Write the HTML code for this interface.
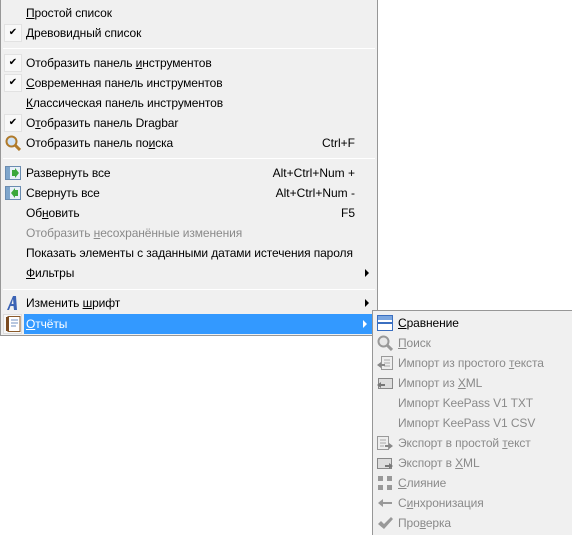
<!DOCTYPE html>
<html><head><meta charset="utf-8"><style>
*{margin:0;padding:0;box-sizing:border-box}
html,body{width:572px;height:535px;overflow:hidden}
body{background:#fff;position:relative;font-family:"Liberation Sans","DejaVu Sans",sans-serif;font-size:12px;color:#000}
.m{position:absolute;background:#f0f0f0;border:1px solid #979797}
.r{position:absolute;left:0;height:20px;line-height:21px;white-space:nowrap}
.t{position:absolute;left:25px;letter-spacing:-0.1px}
.k{position:absolute;right:22px}
.sep{position:absolute;left:2px;right:2px;height:1px;background:#a0a0a0;border-bottom:1px solid #fff}
.chk{position:absolute;left:3px;top:1px;width:18px;height:18px;background:#f8f8f8;border:1px solid #e2e2e2;text-align:center;line-height:16px;font-size:10px}
.ar{position:absolute;right:8px;top:6px;width:0;height:0;border-left:4px solid #000;border-top:4px solid transparent;border-bottom:4px solid transparent}
.g{color:#8a8a8a}
.ic{position:absolute;left:4px;top:2px;width:16px;height:16px}
u{text-decoration:underline}
</style></head><body>
<div class="m" style="left:0;top:-1px;width:378px;height:337px">
 <div class="r" style="top:3px;width:376px"><span class="t"><u>П</u>ростой список</span></div>
 <div class="r" style="top:23px;width:376px"><span class="chk">✔</span><span class="t"><u>Д</u>ревовидный список</span></div>
 <div class="sep" style="top:48px"></div>
 <div class="r" style="top:53px;width:376px"><span class="chk">✔</span><span class="t">Отобразить панель <u>и</u>нструментов</span></div>
 <div class="r" style="top:73px;width:376px"><span class="chk">✔</span><span class="t"><u>С</u>овременная панель инструментов</span></div>
 <div class="r" style="top:93px;width:376px"><span class="t"><u>К</u>лассическая панель инструментов</span></div>
 <div class="r" style="top:113px;width:376px"><span class="chk">✔</span><span class="t">О<u>т</u>образить панель Dragbar</span></div>
 <div class="r" style="top:133px;width:376px"><svg class="ic" viewBox="0 0 16 16"><circle cx="6.5" cy="6.5" r="5" fill="#cfe3f7" stroke="#b07a2a" stroke-width="2"/><path d="M10 10l5 5" stroke="#b07a2a" stroke-width="3"/></svg><span class="t">Отобразить панель по<u>и</u>ска</span><span class="k">Ctrl+F</span></div>
 <div class="sep" style="top:158px"></div>
 <div class="r" style="top:163px;width:376px"><svg class="ic" viewBox="0 0 16 16"><rect x="0.5" y="1.5" width="15" height="13" fill="#e8f0f8" stroke="#6a8cb0"/><rect x="1" y="2" width="4" height="12" fill="#7fa6cc"/><path d="M7 5h3V3l4 5-4 5v-2H7z" fill="#3aa83a"/></svg><span class="t">Развернуть все</span><span class="k">Alt+Ctrl+Num +</span></div>
 <div class="r" style="top:183px;width:376px"><svg class="ic" viewBox="0 0 16 16"><rect x="0.5" y="1.5" width="15" height="13" fill="#e8f0f8" stroke="#6a8cb0"/><rect x="1" y="2" width="4" height="12" fill="#7fa6cc"/><path d="M13 5h-3V3L6 8l4 5v-2h3z" fill="#3aa83a"/></svg><span class="t">Свернуть все</span><span class="k">Alt+Ctrl+Num -</span></div>
 <div class="r" style="top:203px;width:376px"><span class="t">Об<u>н</u>овить</span><span class="k">F5</span></div>
 <div class="r g" style="top:223px;width:376px"><span class="t">Отобразить <u>н</u>есохранённые изменения</span></div>
 <div class="r" style="top:243px;width:376px"><span class="t">Показать элементы с заданными датами истечения пароля</span></div>
 <div class="r" style="top:263px;width:376px"><span class="t"><u>Ф</u>ильтры</span><span class="ar"></span></div>
 <div class="sep" style="top:289px"></div>
 <div class="r" style="top:293px;width:376px"><svg class="ic" viewBox="0 0 16 16"><path d="M2 15L8 1h3l1 14h-3l-.5-4H5.5L4 15z" fill="#3b63b5"/><path d="M6.5 9h2L8 4z" fill="#f0f0f0"/></svg><span class="t">Изменить <u>ш</u>рифт</span><span class="ar"></span></div>
 <div class="r" style="top:314px;left:2px;width:19px;background:#f8f8f8;border:1px solid #ddd"></div>
 <svg style="position:absolute;left:5px;top:316px" width="15" height="16" viewBox="0 0 15 16"><rect x="2" y="0.5" width="12" height="15" fill="#fff" stroke="#8a5a2a"/><rect x="0" y="1" width="3" height="14" fill="#7a4a20"/><path d="M5 4h7M5 7h7M5 10h5" stroke="#7090c0"/></svg>
 <div class="r" style="top:314px;left:23px;width:349px;background:#3399ff;color:#fff"><span class="t" style="left:2px"><u>О</u>тчёты</span><span class="ar" style="border-left-color:#fff;right:6px"></span></div>
</div>
<div class="m" style="left:372px;top:310px;width:210px;height:240px">
 <div class="r" style="top:2px;width:200px"><svg class="ic" viewBox="0 0 16 16"><rect x="0.5" y="0.5" width="15" height="15" fill="#fff" stroke="#3b6fc0"/><rect x="1" y="1" width="14" height="4" fill="#7aa6e0"/><rect x="1" y="7" width="14" height="2" fill="#3b6fc0"/></svg><span class="t"><u>С</u>равнение</span></div>
 <div class="r g" style="top:22px;width:200px"><svg class="ic" viewBox="0 0 16 16"><circle cx="6.5" cy="6.5" r="5" fill="#e8e8e8" stroke="#999" stroke-width="2"/><path d="M10 10l5 5" stroke="#999" stroke-width="3"/></svg><span class="t"><u>П</u>оиск</span></div>
 <div class="r g" style="top:42px;width:200px"><svg class="ic" viewBox="0 0 16 16"><rect x="4.5" y="1.5" width="11" height="13" fill="#eee" stroke="#999"/><path d="M7 5h6M7 8h6M7 11h6" stroke="#aaa"/><path d="M0 10l4-3v2h4v2H4v2z" fill="#888"/></svg><span class="t">Импорт из простого <u>т</u>екста</span></div>
 <div class="r g" style="top:62px;width:200px"><svg class="ic" viewBox="0 0 16 16"><rect x="1.5" y="3.5" width="14" height="10" fill="#ddd" stroke="#888"/><path d="M0 10l4-3v2h4v2H4v2z" fill="#777"/></svg><span class="t">Импорт из <u>X</u>ML</span></div>
 <div class="r g" style="top:82px;width:200px"><span class="t">Импорт KeePass V1 TXT</span></div>
 <div class="r g" style="top:102px;width:200px"><span class="t">Импорт KeePass V1 CSV</span></div>
 <div class="r g" style="top:122px;width:200px"><svg class="ic" viewBox="0 0 16 16"><rect x="0.5" y="1.5" width="11" height="13" fill="#eee" stroke="#999"/><path d="M3 5h6M3 8h6M3 11h4" stroke="#aaa"/><path d="M8 10h4V8l4 3-4 3v-2H8z" fill="#888"/></svg><span class="t">Экспорт в простой <u>т</u>екст</span></div>
 <div class="r g" style="top:142px;width:200px"><svg class="ic" viewBox="0 0 16 16"><rect x="0.5" y="3.5" width="14" height="10" fill="#ddd" stroke="#888"/><path d="M8 10h4V8l4 3-4 3v-2H8z" fill="#777"/></svg><span class="t">Экспорт в <u>X</u>ML</span></div>
 <div class="r g" style="top:162px;width:200px"><svg class="ic" viewBox="0 0 16 16"><path d="M1 1h5v5H1zM10 1h5v5h-5zM1 10h5v5H1zM10 10h5v5h-5z" fill="#999"/></svg><span class="t"><u>С</u>лияние</span></div>
 <div class="r g" style="top:182px;width:200px"><svg class="ic" viewBox="0 0 16 16"><path d="M1 8l5-4v3h9v2H6v3z" fill="#999"/></svg><span class="t">С<u>и</u>нхронизация</span></div>
 <div class="r g" style="top:202px;width:200px"><svg class="ic" viewBox="0 0 16 16"><path d="M1 9l3-3 3 3 7-7 2 2-9 10z" fill="#999"/></svg><span class="t">Про<u>в</u>ерка</span></div>
</div>
</body></html>
